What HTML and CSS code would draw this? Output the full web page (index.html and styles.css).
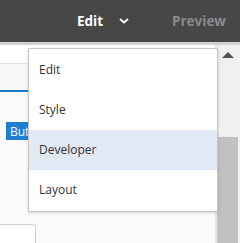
FILE: index.html
```html
<!DOCTYPE html>
<html>
  <head>
    <meta charset="UTF-8" />
    <meta name="viewport" content="width=device-width, initial-scale=1.0" />
    <title>Editor</title>
    <link rel="stylesheet" href="styles.css">
  </head>
  <body>
    <header id="topbar">
      <div class="mode-switch">
        <span class="mode-current">Edit</span>
        <svg class="chevron" width="10" height="6" viewBox="0 0 10 6">
          <path d="M1 1 L5 4.5 L9 1" fill="none" stroke="#fff" stroke-width="1.8" />
        </svg>
      </div>
      <span class="mode-preview">Preview</span>
    </header>
    <div id="workspace">
      <main class="canvas">
        <div class="toolbar"></div>
        <div class="tabs">
          <div class="tab active"></div>
        </div>
        <div class="panel">
          <button class="btn-primary">Button</button>
          <div class="field"></div>
        </div>
      </main>
      <div class="scrollbar">
        <span class="arrow-up"></span>
        <div class="thumb"></div>
      </div>
    </div>
    <ul id="modeMenu" class="dropdown">
      <li>Edit</li>
      <li>Style</li>
      <li class="selected">Developer</li>
      <li>Layout</li>
    </ul>
  </body>
</html>
```

FILE: styles.css
```css
* {
  box-sizing: border-box;
  margin: 0;
  padding: 0;
}

html,
body {
  width: 240px;
  height: 243px;
  overflow: hidden;
}

body {
  font-family: "Open Sans", "Noto Sans", sans-serif;
  color: #333;
  background-color: #fafafa;
  display: flex;
  flex-direction: column;
}

#topbar {
  height: 42px;
  flex-shrink: 0;
  background-color: #474747;
  border-bottom: 3px solid #d2d2d2;
  box-sizing: content-box;
  display: flex;
  align-items: center;
  padding-left: 77px;
  font-weight: bold;
  font-size: 13.5px;
}

.mode-switch {
  display: flex;
  align-items: center;
  width: 95px;
}

.mode-current {
  color: #fff;
}

.chevron {
  margin-left: 16px;
  margin-top: -1px;
}

.mode-preview {
  color: #8c8c8c;
}

#workspace {
  flex: 1;
  display: flex;
}

.canvas {
  flex: 1;
  background-color: #fff;
  border-right: 2px solid #e6e6e6;
  display: flex;
  flex-direction: column;
}

.toolbar {
  height: 19px;
  border-bottom: 1px solid #e2e2e2;
}

.tabs {
  height: 28px;
  background-color: #f8f8f8;
  display: flex;
}

.tab.active {
  width: 40px;
  border-bottom: 2px solid #1a7bc4;
}

.panel {
  flex: 1;
  background-color: #fafafa;
  padding: 30px 0 0 6px;
  display: flex;
  flex-direction: column;
  align-items: flex-start;
}

.btn-primary {
  background-color: #1e7fd2;
  color: #fff;
  border: none;
  font-family: inherit;
  font-size: 12px;
  height: 18px;
  padding: 0 4px;
}

.field {
  margin: 84px 0 0 -6px;
  width: 36px;
  height: 30px;
  background-color: #fff;
  border: 1px solid #d0d0d0;
  border-left: none;
  border-radius: 0 4px 0 0;
}

.scrollbar {
  width: 23px;
  background-color: #f0f0f0;
  display: flex;
  flex-direction: column;
  align-items: flex-start;
}

.arrow-up {
  width: 0;
  height: 0;
  margin: 7px 0 0 5px;
  border-left: 6px solid transparent;
  border-right: 6px solid transparent;
  border-bottom: 6px solid #505050;
}

.thumb {
  margin-top: 79px;
  width: 21px;
  flex: 1;
  background-color: #c1c1c1;
}

.dropdown {
  position: absolute;
  left: 28px;
  top: 48px;
  width: 190px;
  list-style: none;
  background-color: #fff;
  border: 1px solid #c6c6c6;
  box-shadow: 0 1px 3px rgba(0, 0, 0, 0.15);
  padding: 1px 0;
  font-size: 12px;
  color: #333;
}

.dropdown li {
  height: 40px;
  line-height: 40px;
  padding-left: 10px;
}

.dropdown li.selected {
  background-color: #e1e9f5;
}
```
